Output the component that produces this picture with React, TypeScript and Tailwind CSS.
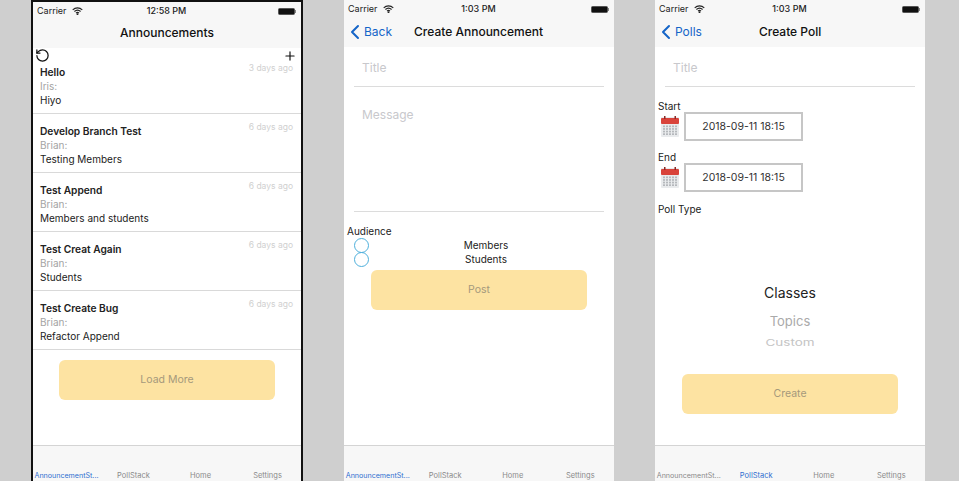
import React from 'react';
import { ChevronLeft, Plus, RotateCcw } from 'lucide-react';

const posts = [
    { title: 'Hello', by: 'Iris:', body: 'Hiyo', age: '3 days ago' },
    { title: 'Develop Branch Test', by: 'Brian:', body: 'Testing Members', age: '6 days ago' },
    { title: 'Test Append', by: 'Brian:', body: 'Members and students', age: '6 days ago' },
    { title: 'Test Creat Again', by: 'Brian:', body: 'Students', age: '6 days ago' },
    { title: 'Test Create Bug', by: 'Brian:', body: 'Refactor Append', age: '6 days ago' },
];

const StatusBar = ({ time }: { time: string }) => (
    <div className="flex h-[18px] items-center justify-between bg-[#f7f7f7] pl-1 pr-[5px] text-[9px] text-[#222]">
        <div className="flex w-[70px] items-center gap-[5px]">
            <span>Carrier</span>
            <svg width="11" height="8" viewBox="0 0 11 8" fill="none" stroke="#222" strokeWidth="1.1">
                <path d="M0.7 2.8a7 7 0 0 1 9.6 0" />
                <path d="M2.4 4.5a4.6 4.6 0 0 1 6.2 0" />
                <path d="M4 6.1a2.2 2.2 0 0 1 3 0" />
                <circle cx="5.5" cy="7.2" r="0.4" fill="#222" />
            </svg>
        </div>
        <span className="font-medium">{time}</span>
        <div className="flex w-[70px] justify-end">
            <div className="flex items-center">
                <div className="h-[7px] w-[17px] rounded-[1.5px] border border-[#555] bg-[#111]" />
                <div className="h-[3px] w-[1px] bg-[#888]" />
            </div>
        </div>
    </div>
);

const TabBar = ({ active }: { active: number }) => {
    const tabs = ['AnnouncementSt...', 'PollStack', 'Home', 'Settings'];
    return (
        <div className="mt-auto grid h-[36px] grid-cols-4 items-end border-t border-[#d4d4d4] bg-[#f7f7f7]">
            {tabs.map((t, i) => (
                <div
                    key={t}
                    className={`min-w-0 whitespace-nowrap text-center leading-[10px] ${i === 0 ? 'text-[7.1px]' : 'text-[7.5px]'} ${i === active ? 'text-[#2f6fd0]' : 'text-[#8a8a8a]'}`}
                >
                    {t}
                </div>
            ))}
        </div>
    );
};

const YellowButton = ({ label, className }: { label: string; className: string }) => (
    <div className={`flex h-10 w-[216px] items-center justify-center self-center rounded-md bg-[#fde3a2] text-[10.5px] text-[#a5997c] ${className}`}>
        {label}
    </div>
);

const NavBar = ({ back, title, titleClass }: { back: string; title: string; titleClass: string }) => (
    <div className="flex h-[29px] items-center bg-[#f7f7f7] pb-[2px] text-[12px]">
        <ChevronLeft size={24} strokeWidth={2} className="-ml-[1px] text-[#1565c8]" />
        <span className="-ml-[3px] text-[#1565c8]">{back}</span>
        <span className={`font-medium text-[#111] ${titleClass}`}>{title}</span>
    </div>
);

const DateRow = ({ label }: { label: string }) => (
    <div>
        <div className="pl-[3px] text-[10px] leading-[12px] text-[#222]">{label}</div>
        <div className="flex items-center pl-[6px]">
            <svg width="18" height="21" viewBox="0 0 18 21">
                <rect x="0" y="1" width="18" height="20" rx="1" fill="#e9ebed" />
                <rect x="0" y="2" width="18" height="6" rx="1" fill="#d9433b" />
                <rect x="3" y="0" width="1.5" height="3" fill="#8c2a26" />
                <rect x="13.5" y="0" width="1.5" height="3" fill="#8c2a26" />
                <g fill="#b5b8bc">
                    {[0, 1, 2, 3].map(r =>
                        [0, 1, 2, 3, 4].map(c => (
                            <rect key={`${r}-${c}`} x={2 + c * 3} y={9.5 + r * 2.6} width="2" height="1.7" />
                        ))
                    )}
                </g>
            </svg>
            <div className="ml-[5px] flex h-[29px] w-[119px] items-center justify-center border-2 border-[#c6c6c6] text-[10.5px] text-[#333]">
                2018-09-11 18:15
            </div>
        </div>
    </div>
);

const AudienceRow = ({ label }: { label: string }) => (
    <div className="flex h-[14px] items-center pl-[10px]">
        <div className="h-[15px] w-[15px] shrink-0 rounded-full border border-[#4fb0dc]" />
        <div className="flex-1 pr-[11px] text-center text-[10px] leading-[14px] text-[#222]">{label}</div>
    </div>
);

export default function App() {
    return (
        <div className="flex h-[481px] w-[959px] overflow-hidden bg-[#cfcfcf] pl-[31px] [font-family:Inter,'Liberation_Sans',sans-serif]">
            {/* Announcements */}
            <div className="flex h-[481px] w-[272px] flex-col border-x-2 border-t-2 border-[#111] bg-white">
                <div className="flex h-[46px] flex-col bg-[#f7f7f7]">
                    <StatusBar time="12:58 PM" />
                    <div className="flex flex-1 items-center justify-center pb-[3px] text-[12px] font-medium text-[#111]">Announcements</div>
                </div>
                <div className="relative">
                    <RotateCcw size={15} strokeWidth={2} className="absolute left-[2px] top-0 text-[#111]" />
                    <Plus size={14} strokeWidth={2} className="absolute right-[4px] top-[1px] text-[#111]" />
                    {posts.map((p, i) => (
                        <div key={p.title} className={`relative border-b border-[#d9d9d9] pl-[7px] ${i === 0 ? 'h-[66px] pt-[17px]' : 'h-[59px] pt-[10px]'}`}>
                            <div className="text-[10.2px] leading-[14px] font-semibold text-[#222]">{p.title}</div>
                            <div className="text-[10px] leading-[14px] text-[#a3a3a3]">{p.by}</div>
                            <div className="text-[10px] leading-[14px] text-[#222]">{p.body}</div>
                            <div className={`absolute right-[8px] text-[8.5px] leading-[12px] text-[#d0d0d0] ${i === 0 ? 'top-[14px]' : 'top-[7px]'}`}>{p.age}</div>
                        </div>
                    ))}
                </div>
                <YellowButton label="Load More" className="mt-[10px]" />
                <TabBar active={0} />
            </div>

            {/* Create Announcement */}
            <div className="ml-[41px] flex h-[481px] w-[270px] flex-col bg-white">
                <StatusBar time="1:03 PM" />
                <NavBar back="Back" title="Create Announcement" titleClass="ml-[22px]" />
                <div className="mx-[10px] h-[40px] border-b border-[#dcdcdc] pl-2 pt-[13px] text-[12px] leading-[16px] text-[#c8c8cc]">Title</div>
                <div className="mx-[10px] h-[125px] border-b border-[#dcdcdc] pl-2 pt-5 text-[12px] leading-[16px] text-[#c8c8cc]">Message</div>
                <div className="mt-[13px] pl-[3px] text-[10px] leading-[13px] text-[#222]">Audience</div>
                <AudienceRow label="Members" />
                <AudienceRow label="Students" />
                <YellowButton label="Post" className="mt-[4px]" />
                <TabBar active={0} />
            </div>

            {/* Create Poll */}
            <div className="ml-[41px] flex h-[481px] w-[270px] flex-col bg-white">
                <StatusBar time="1:03 PM" />
                <NavBar back="Polls" title="Create Poll" titleClass="ml-[57px]" />
                <div className="mx-[10px] h-[40px] border-b border-[#dcdcdc] pl-2 pt-[13px] text-[12px] leading-[16px] text-[#c8c8cc]">Title</div>
                <div className="mt-[13px] flex flex-col gap-[10px]">
                    <DateRow label="Start" />
                    <DateRow label="End" />
                </div>
                <div className="mt-[11px] pl-[3px] text-[10px] leading-[13px] text-[#222]">Poll Type</div>
                <div className="mt-[68px] text-center text-[14px] leading-[18px] text-[#222]">Classes</div>
                <div className="mt-[10px] text-center text-[13px] leading-[18px] text-[#aaa]">Topics</div>
                <div className="mt-[7px] h-[12px] scale-y-[0.7] text-center text-[13.5px] leading-[12px] text-[#c4c4c4]">Custom</div>
                <YellowButton label="Create" className="mt-[25px]" />
                <TabBar active={1} />
            </div>
        </div>
    );
}
